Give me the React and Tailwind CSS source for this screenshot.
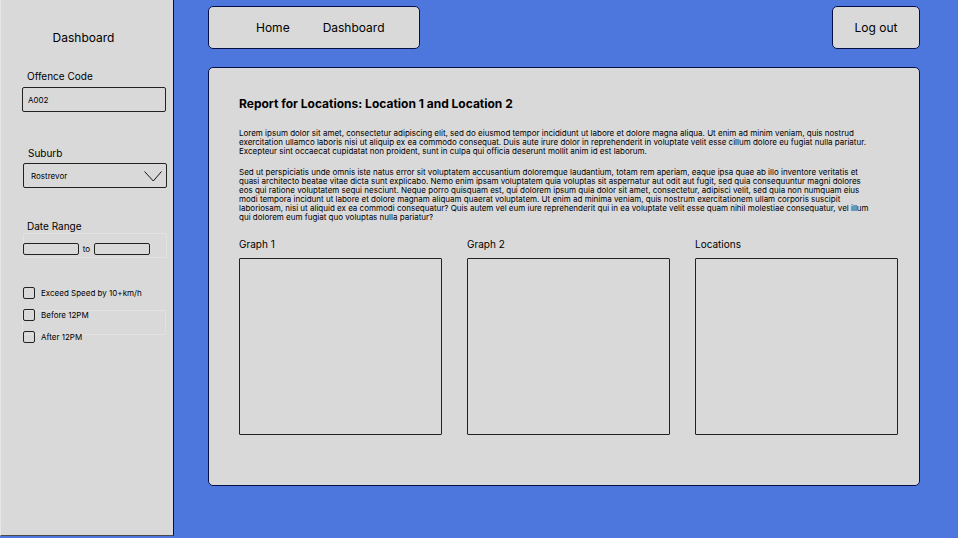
const panel = "rounded-[5px] border border-[#060f45] bg-[#d9d9d9]";

function Check({ id, label }) {
  return (
    <div className="relative flex h-[13px] items-center gap-[6px]">
      <input
        id={id}
        type="checkbox"
        className="size-3 appearance-none rounded-[2px] border border-[#222] checked:bg-[#222]"
      />
      <label htmlFor={id} className="text-[8px] leading-3">
        {label}
      </label>
    </div>
  );
}

function Graph({ title }) {
  return (
    <section className="flex-1">
      <h2 className="text-[10px] leading-4">{title}</h2>
      <div className="mt-[6px] h-[177px] rounded-[1px] border border-[#222]" />
    </section>
  );
}

export default function App() {
  return (
    <div className="flex min-h-screen bg-[#4e77dd] font-['Inter',sans-serif] text-black">
      <aside className="mb-[2px] w-[174px] shrink-0 border-r border-b border-l border-r-[#060f45] border-b-[#4b4b45] border-l-[#e6e6e6] bg-[#d9d9d9] pr-[6px] pl-[21px]">
        <h1 className="mt-[30px] pr-[22px] text-center text-[12px] leading-4">Dashboard</h1>

        <div className="mt-[22px] pr-px">
          <label htmlFor="code" className="block pl-[5px] text-[10px] leading-4">
            Offence Code
          </label>
          <input
            id="code"
            defaultValue="A002"
            className="mt-[3px] block h-[25px] w-full rounded-[2px] border border-[#222] bg-transparent px-[5px] text-[8px] outline-none"
          />
        </div>

        <div className="mt-[33px] pl-px">
          <label htmlFor="suburb" className="block pl-[5px] text-[10px] leading-4">
            Suburb
          </label>
          <div className="relative mt-[2px]">
            <select
              id="suburb"
              className="block h-[25px] w-full appearance-none rounded-[2px] border border-[#222] bg-transparent pr-6 pl-[7px] text-[8px] outline-none"
            >
              <option>Rostrevor</option>
            </select>
            <svg
              viewBox="0 0 18 11"
              className="pointer-events-none absolute top-[8px] right-[5px] h-[11px] w-[18px]"
              fill="none"
              stroke="#111"
            >
              <path d="M0.5 0.5 L9.3 10 L17.5 0.5" />
            </svg>
          </div>
        </div>

        <fieldset className="mt-[30px] pl-px">
          <legend className="block pl-1 text-[10px] leading-4">Date Range</legend>
          <div className="-mt-px flex h-[25px] items-center rounded-[2px] border border-[#e2e2e2] pt-[6px]">
            <input
              aria-label="From"
              className="-ml-px h-3 w-[56px] rounded-[2px] border border-[#222] bg-transparent px-1 text-[8px] outline-none"
            />
            <span className="w-[15px] text-center text-[8px] leading-3">to</span>
            <input
              aria-label="To"
              className="h-3 w-[56px] rounded-[2px] border border-[#222] bg-transparent px-1 text-[8px] outline-none"
            />
          </div>
        </fieldset>

        <div className="relative mt-[28px] flex flex-col gap-[9px] pl-px">
          <div className="pointer-events-none absolute top-6 right-px left-0 h-[25px] rounded-[2px] border border-[#e2e2e2]" />
          <Check id="speed" label="Exceed Speed by 10+km/h" />
          <Check id="before" label="Before 12PM" />
          <Check id="after" label="After 12PM" />
        </div>
      </aside>

      <main className="min-w-0 flex-1 pt-[6px] pr-[38px] pl-[34px]">
        <header className="flex justify-between text-[12px] leading-4">
          <nav className={`${panel} flex h-[43px] items-center gap-[33px] pr-[34px] pl-[47px]`}>
            <a href="#home">Home</a>
            <a href="#dashboard">Dashboard</a>
          </nav>
          <button type="button" className={`${panel} h-[43px] w-[88px]`}>
            Log out
          </button>
        </header>

        <article className={`${panel} mt-[18px] pt-[28px] pr-[21px] pb-[50px] pl-[30px]`}>
          <h1 className="text-[12px] leading-4 font-bold">
            Report for Locations: Location 1 and Location 2
          </h1>
          <div className="mt-[17px] mr-[25px] text-[8px] leading-[9px]">
            <p>
              Lorem ipsum dolor sit amet, consectetur adipiscing elit, sed do eiusmod tempor
              incididunt ut labore et dolore magna aliqua. Ut enim ad minim veniam, quis nostrud
              exercitation ullamco laboris nisi ut aliquip ex ea commodo consequat. Duis aute irure
              dolor in reprehenderit in voluptate velit esse cillum dolore eu fugiat nulla pariatur.
              Excepteur sint occaecat cupidatat non proident, sunt in culpa qui officia deserunt
              mollit anim id est laborum.
            </p>
            <p className="mt-3">
              Sed ut perspiciatis unde omnis iste natus error sit voluptatem accusantium doloremque
              laudantium, totam rem aperiam, eaque ipsa quae ab illo inventore veritatis et quasi
              architecto beatae vitae dicta sunt explicabo. Nemo enim ipsam voluptatem quia voluptas
              sit aspernatur aut odit aut fugit, sed quia consequuntur magni dolores eos qui ratione
              voluptatem sequi nesciunt. Neque porro quisquam est, qui dolorem ipsum quia dolor sit
              amet, consectetur, adipisci velit, sed quia non numquam eius modi tempora incidunt ut
              labore et dolore magnam aliquam quaerat voluptatem. Ut enim ad minima veniam, quis
              nostrum exercitationem ullam corporis suscipit laboriosam, nisi ut aliquid ex ea
              commodi consequatur? Quis autem vel eum iure reprehenderit qui in ea voluptate velit
              esse quam nihil molestiae consequatur, vel illum qui dolorem eum fugiat quo voluptas
              nulla pariatur?
            </p>
          </div>
          <div className="mt-[14px] flex gap-[25px]">
            <Graph title="Graph 1" />
            <Graph title="Graph 2" />
            <Graph title="Locations" />
          </div>
        </article>
      </main>
    </div>
  );
}
